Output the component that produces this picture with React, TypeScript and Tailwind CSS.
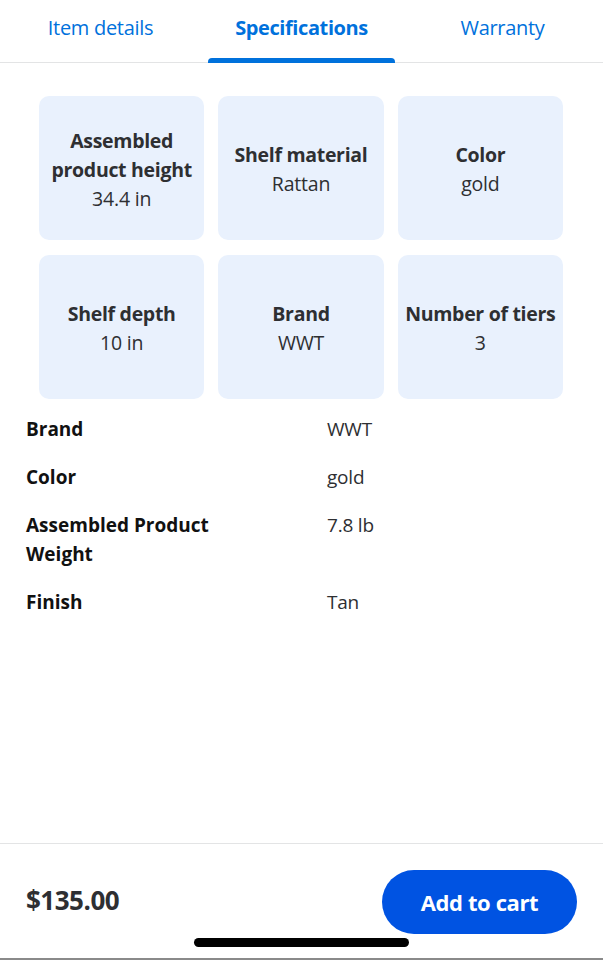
const specs = [
  { title: "Assembled product height", value: "34.4 in" },
  { title: "Shelf material", value: "Rattan" },
  { title: "Color", value: "gold" },
  { title: "Shelf depth", value: "10 in" },
  { title: "Brand", value: "WWT" },
  { title: "Number of tiers", value: "3" },
];

const rows = [
  { label: "Brand", value: "WWT" },
  { label: "Color", value: "gold" },
  { label: "Assembled Product Weight", value: "7.8 lb" },
  { label: "Finish", value: "Tan" },
];

const tabs = ["Item details", "Specifications", "Warranty"];

export default function App() {
  return (
    <div
      className="w-[603px] h-[960px] bg-white flex flex-col text-[#2e2f32]"
      style={{ fontFamily: '"Open Sans", "Noto Sans", sans-serif' }}
    >
      {/* tabs */}
      <div className="grid grid-cols-3 h-[63px] border-b border-[#e3e4e5] shrink-0">
        {tabs.map((t, i) => (
          <div key={t} className="relative flex justify-center pt-[13px]">
            <span
              className={
                i === 1
                  ? "text-[20px] leading-[30px] font-bold text-[#0071dc] tracking-[-0.4px]"
                  : "text-[20px] leading-[30px] text-[#0071dc] tracking-[-0.3px]"
              }
            >
              {t}
            </span>
            {i === 1 && (
              <div className="absolute bottom-[-1px] left-[7px] right-[7px] h-[5px] rounded-t-[4px] bg-[#0071dc]" />
            )}
          </div>
        ))}
      </div>

      <div className="flex-1">
        {/* cards */}
        <div className="grid grid-cols-3 gap-x-[14px] gap-y-[15px] pl-[39px] pr-[40px] pt-[33px]">
          {specs.map((s) => (
            <div
              key={s.title}
              className="h-[144px] rounded-[10px] bg-[#e9f1fd] flex flex-col items-center justify-center text-center px-[4px] pt-[2px]"
            >
              <div className="text-[19.5px] leading-[29px] font-bold tracking-[-0.3px]">{s.title}</div>
              <div className="text-[19.5px] leading-[29px] tracking-[-0.2px]">{s.value}</div>
            </div>
          ))}
        </div>

        {/* list */}
        <div className="flex flex-col gap-[19px] pl-[26px] pt-[16px]">
          {rows.map((r) => (
            <div key={r.label} className="grid grid-cols-[301px_1fr] text-[19px] leading-[29px]">
              <div className="font-bold text-[#111] max-w-[210px]">{r.label}</div>
              <div className="tracking-[-0.2px]">{r.value}</div>
            </div>
          ))}
        </div>
      </div>

      {/* footer */}
      <div className="h-[117px] border-t border-[#e3e4e5] shrink-0 relative flex items-start justify-between pl-[26px] pr-[26px] pt-[26px]">
        <div className="text-[26px] leading-[60px] font-bold tracking-[-0.5px]">$135.00</div>
        <button className="w-[195px] h-[64px] rounded-full bg-[#0053e2] text-white text-[22px] font-bold tracking-[-0.4px]">
          Add to cart
        </button>
        <div className="absolute left-[194px] top-[94px] w-[215px] h-[9px] rounded-full bg-black" />
        <div className="absolute left-0 right-0 bottom-0 h-[2px] bg-[#8a8a8a]" />
      </div>
    </div>
  );
}
